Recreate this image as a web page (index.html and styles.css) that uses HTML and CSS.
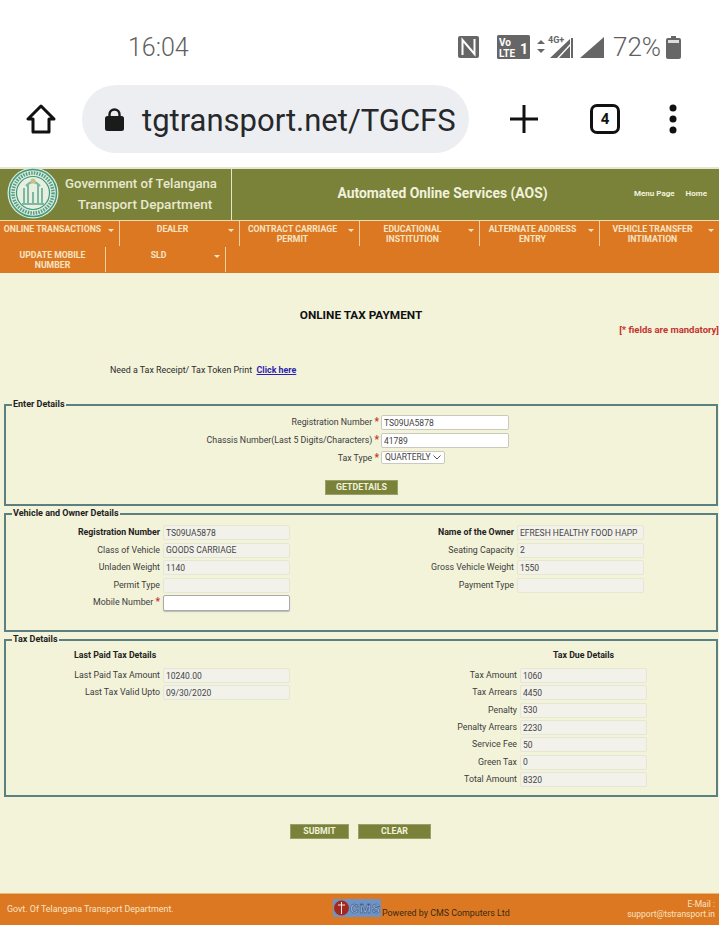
FILE: index.html
```html
<!DOCTYPE html>
<html lang="en">
<head>
<meta charset="utf-8">
<title>Online Tax Payment</title>
<link rel="stylesheet" href="styles.css">
</head>
<body>
<div class="status">
  <span class="time">16:04</span>
  <svg class="ic-nfc" width="21" height="22" viewBox="0 0 21 22"><rect width="21" height="22" rx="2" fill="#666"/><path d="M4.500 19V4l12 14V3" fill="none" stroke="#fff" stroke-width="2"/></svg>
  <svg class="ic-volte" width="33" height="24" viewBox="0 0 33 24"><rect width="33" height="24" rx="1.5" fill="#666"/><text x="2" y="11" class="v-txt">Vo</text><text x="2" y="22" class="v-txt">LTE</text><text x="23" y="19" class="v-one">1</text></svg>
  <svg class="ic-net" width="67" height="24" viewBox="0 0 67 24"><path d="M0 9l4-4 4 4zM0 14h8l-4 4z" fill="#666"/><text x="11" y="8" class="g-txt">4G+</text><path d="M13 23L33 4v5L20 23z" fill="#666"/><path d="M22 23L33 11v12z" fill="#666"/><path d="M34 3h2v20h-2z" fill="#666"/><path d="M43 23L67 2v21z" fill="#666"/></svg>
  <span class="batt-txt">72%</span>
  <svg class="ic-batt" width="15" height="23" viewBox="0 0 15 23"><path d="M5 0h5v2h3a2 2 0 0 1 2 2v17a2 2 0 0 1-2 2H2a2 2 0 0 1-2-2V4a2 2 0 0 1 2-2h3z" fill="#666"/><rect x="2" y="4" width="11" height="3" fill="#ddd"/></svg>
</div>
<div class="toolbar">
  <svg class="ic-home" width="30" height="30" viewBox="0 0 30 30"><path d="M15 2L2 15h5v13h16V15h5z" fill="none" stroke="#111" stroke-width="3" stroke-linejoin="round"/></svg>
  <div class="pill">
    <svg width="19" height="23" viewBox="0 0 19 23"><path d="M4.500 9V6.500a5 5 0 0 1 10 0V9" fill="none" stroke="#1b1b1b" stroke-width="2.400"/><rect y="8" width="19" height="15" rx="2.500" fill="#1b1b1b"/></svg>
    <span class="url">tgtransport.net/TGCFS</span>
  </div>
  <svg class="ic-plus" width="28" height="28" viewBox="0 0 28 28"><path d="M14 0v28M0 14h28" stroke="#111" stroke-width="3"/></svg>
  <div class="tabs">4</div>
  <svg class="ic-dots" width="16" height="30" viewBox="0 0 16 30"><circle cx="8" cy="4" r="3.500" fill="#111"/><circle cx="8" cy="15" r="3.500" fill="#111"/><circle cx="8" cy="26" r="3.500" fill="#111"/></svg>
</div>

<header class="site-head">
  <div class="brand">
    <svg class="emblem" width="52" height="52" viewBox="0 0 52 52">
      <circle cx="26" cy="26" r="25.500" fill="#dfeadb"/>
      <circle cx="26" cy="26" r="23.500" fill="none" stroke="#3f9a7c" stroke-width="1.500"/>
      <circle cx="26" cy="26" r="20" fill="none" stroke="#4f9f86" stroke-width="3.500" stroke-dasharray="1.500 1.200"/>
      <circle cx="26" cy="26" r="16.500" fill="#e6efe0" stroke="#3f9a7c" stroke-width="1.200"/>
      <path d="M15 37h22M17 37V21M35 37V21M21 37V18M31 37V18M26 37V25" stroke="#7db8a2" stroke-width="2" fill="none"/>
      <path d="M19 19q7-8 14 0" stroke="#7db8a2" stroke-width="2" fill="none"/>
      <circle cx="26" cy="14" r="2.500" fill="#c9c27e"/>
    </svg>
    <div class="brand-name">Government of Telangana<br><span class="dept">Transport Department</span></div>
  </div>
  <div class="head-title">Automated Online Services (AOS)</div>
  <nav class="head-links"><a>Menu Page</a><a>Home</a></nav>
</header>

<nav class="menu">
  <div class="menu-row">
    <div class="mi"><span>ONLINE TRANSACTIONS</span><i></i></div>
    <div class="mi"><span>DEALER</span><i></i></div>
    <div class="mi"><span>CONTRACT CARRIAGE PERMIT</span><i></i></div>
    <div class="mi"><span>EDUCATIONAL INSTITUTION</span><i></i></div>
    <div class="mi"><span>ALTERNATE ADDRESS ENTRY</span><i></i></div>
    <div class="mi"><span>VEHICLE TRANSFER INTIMATION</span><i></i></div>
  </div>
  <div class="menu-row">
    <div class="mi mi-plain"><span>UPDATE MOBILE NUMBER</span></div>
    <div class="mi"><span>SLD</span><i></i></div>
  </div>
</nav>

<main class="main">
  <h1 class="title">ONLINE TAX PAYMENT</h1>
  <p class="mandatory">[* fields are mandatory]</p>
  <p class="receipt">Need a Tax Receipt/ Tax Token Print &nbsp;<a href="#">Click here</a></p>

  <fieldset class="box box-enter">
    <legend>Enter Details</legend>
    <div class="enter-grid">
      <label>Registration Number <b>*</b></label><input value="TS09UA5878">
      <label>Chassis Number(Last 5 Digits/Characters) <b>*</b></label><input value="41789">
      <label>Tax Type <b>*</b></label><div class="sel">QUARTERLY <svg width="8" height="5" viewBox="0 0 8 5"><path d="M.5.500L4 4l3.500-3.500" fill="none" stroke="#555"/></svg></div>
    </div>
    <div class="center"><button class="btn btn-get">GETDETAILS</button></div>
  </fieldset>

  <fieldset class="box box-vehicle">
    <legend>Vehicle and Owner Details</legend>
    <div class="sides">
      <div class="side side-l">
        <label class="strong">Registration Number</label><input class="ro" readonly value="TS09UA5878">
        <label>Class of Vehicle</label><input class="ro" readonly value="GOODS CARRIAGE">
        <label>Unladen Weight</label><input class="ro" readonly value="1140">
        <label>Permit Type</label><input class="ro" readonly>
        <label>Mobile Number <b>*</b></label><input class="mobile">
      </div>
      <div class="side side-r">
        <label class="strong">Name of the Owner</label><input class="ro" readonly value="EFRESH HEALTHY FOOD HAPP">
        <label>Seating Capacity</label><input class="ro" readonly value="2">
        <label>Gross Vehicle Weight</label><input class="ro" readonly value="1550">
        <label>Payment Type</label><input class="ro" readonly>
      </div>
    </div>
  </fieldset>

  <fieldset class="box box-tax">
    <legend>Tax Details</legend>
    <div class="sides sides-tax">
      <div class="side side-l">
        <div class="head-left">Last Paid Tax Details</div>
        <label>Last Paid Tax Amount</label><input class="ro" readonly value="10240.00">
        <label>Last Tax Valid Upto</label><input class="ro" readonly value="09/30/2020">
      </div>
      <div class="side side-r">
        <div class="head-right">Tax Due Details</div>
        <label>Tax Amount</label><input class="ro" readonly value="1060">
        <label>Tax Arrears</label><input class="ro" readonly value="4450">
        <label>Penalty</label><input class="ro" readonly value="530">
        <label>Penalty Arrears</label><input class="ro" readonly value="2230">
        <label>Service Fee</label><input class="ro" readonly value="50">
        <label>Green Tax</label><input class="ro" readonly value="0">
        <label>Total Amount</label><input class="ro" readonly value="8320">
      </div>
    </div>
  </fieldset>

  <div class="actions">
    <button class="btn btn-submit">SUBMIT</button>
    <button class="btn btn-clear">CLEAR</button>
  </div>
</main>

<footer class="foot">
  <div class="foot-l">Govt. Of Telangana Transport Department.</div>
  <div class="foot-c">
    <svg width="48" height="18" viewBox="0 0 48 18"><rect width="48" height="18" fill="#6f93c4"/><circle cx="8.500" cy="9" r="7.500" fill="#a5281f"/><path d="M8.500 3v12M5 6h7" stroke="#eee" stroke-width="1"/><text x="17" y="14" class="cms">CMS</text></svg>
    <span>Powered by CMS Computers Ltd</span>
  </div>
  <div class="foot-r">E-Mail :<br>support@tstransport.in</div>
</footer>
</body>
</html>
```
FILE: styles.css
```css
* { box-sizing: border-box; }
html, body { margin: 0; padding: 0; }
body {
  width: 719px;
  height: 928px;
  overflow: hidden;
  background: #fff;
  font-family: Roboto, "Liberation Sans", sans-serif;
  color: #333;
}

/* phone chrome */
.status {
  height: 85px;
  display: flex;
  align-items: center;
  padding: 9px 0 0 128px;
  color: #666;
}
.time { font-size: 25px; font-weight: 300; width: 330px; color: #5f5f5f; }
.status svg { display: block; flex: none; }
.ic-volte { margin-left: 18px; }
.ic-net { margin-left: 7px; }
.batt-txt { font-size: 26px; font-weight: 300; margin-left: 9px; width: 53px; color: #5f5f5f; }
.v-txt { font: 700 10px Roboto, sans-serif; fill: #fff; }
.v-one { font: 700 14px Roboto, sans-serif; fill: #fff; }
.g-txt { font: 700 9px Roboto, sans-serif; fill: #666; }

.toolbar {
  height: 82px;
  display: flex;
  align-items: flex-start;
  padding-left: 26px;
}
.toolbar svg { display: block; flex: none; }
.ic-home { margin-top: 19px; }
.pill {
  width: 387px;
  height: 68px;
  margin-left: 26px;
  background: #eceef1;
  border-radius: 34px;
  display: flex;
  align-items: center;
  padding-left: 23px;
}
.url { margin-left: 18px; padding-top: 2px; font-size: 31px; color: #26282b; white-space: nowrap; }
.ic-plus { margin: 20px 0 0 41px; }
.tabs {
  margin: 19px 0 0 52px;
  width: 30px;
  height: 30px;
  border: 3px solid #111;
  border-radius: 7px;
  font: 700 15px/24px Roboto, sans-serif;
  color: #111;
  text-align: center;
}
.ic-dots { margin: 19px 0 0 45px; }

/* site header */
.site-head {
  height: 53px;
  background: #7a8139;
  border-top: 2px solid #e6e6d2;
  display: flex;
  align-items: center;
  color: #f1f1dc;
}
.brand {
  flex: none;
  width: 232px;
  height: 100%;
  border-right: 1px solid #e6e6c8;
  display: flex;
  align-items: center;
  padding-left: 8px;
}
.emblem { display: block; flex: none; margin: -3px 0 0 -1px; }
.brand-name {
  flex: 1;
  text-align: center;
  font-size: 13.200px;
  font-weight: 500;
  line-height: 20px;
  margin: 0 8px 0 0;
  color: #e8e8d0;
  white-space: nowrap;
}
.dept { font-size: 13.600px; padding-left: 8px; }
.head-title {
  flex: none;
  width: 402px;
  padding-left: 19px;
  margin-top: -3px;
  text-align: center;
  font-size: 13.900px;
  font-weight: 700;
  white-space: nowrap;
}
.head-links { flex: none; display: flex; gap: 11px; margin-top: -3px; font-size: 8px; font-weight: 700; white-space: nowrap; }

.menu { height: 53px; background: #dd7822; border-top: 1px solid #f0d9b0; color: #f5e4c4; }
.menu-row { display: flex; height: 26px; }
.mi {
  flex: none;
  width: 120px;
  display: flex;
  align-items: flex-start;
  padding-top: 3px;
  border-right: 1px solid #f2cf9c;
  margin-bottom: 1px;
}
.mi span {
  width: 105px;
  text-align: center;
  font-size: 8.700px;
  line-height: 10px;
  font-weight: 700;
}
.mi i {
  margin: 5px 0 0 3px;
  width: 0;
  height: 0;
  border: 3.500px solid transparent;
  border-top: 3px solid #f5e4c4;
  border-bottom: 0;
}
.mi-plain { width: 106px; justify-content: center; }
.mi-plain span { width: 76px; }

/* content */
.main { height: 620px; background: #f3f3da; padding-top: 35px; overflow: hidden; }
.title { margin: 0; font-size: 11.800px; line-height: 14px; font-weight: 700; color: #111; text-align: center; padding-left: 3px; }
.mandatory { margin: 2px 0 0; font-size: 9.500px; line-height: 11px; font-weight: 700; color: #c4332f; text-align: right; }
.receipt { margin: 30px 0 0 110px; font-size: 8.900px; line-height: 11px; color: #2c2c2c; }
.receipt a { color: #2c1fb0; font-weight: 700; }

.box {
  margin: 23px 1px 0 4px;
  padding: 0;
  min-width: 0;
  border: 2px solid #5c7f7f;
}
.box + .box { margin-top: 2px; }
.box legend {
  margin-left: 6px;
  padding: 0 1px;
  font-size: 9px;
  line-height: 11px;
  font-weight: 700;
  color: #222;
}
input {
  display: block;
  width: 100%;
  height: 15px;
  margin: 0;
  padding: 0 2px;
  font: 400 8.500px Roboto, sans-serif;
  color: #444;
  background: #fff;
  border: 1px solid #c9c9bd;
  border-radius: 2px;
  outline: none;
}
label {
  font-size: 8.800px;
  line-height: 15px;
  height: 15px;
  color: #3c3c3c;
  text-align: right;
  white-space: nowrap;
}
label b { color: #c4332f; font-weight: 700; font-size: 10px; line-height: 0; }
label.strong { font-weight: 700; color: #222; }

.enter-grid {
  display: grid;
  grid-template-columns: 373px 128px;
  column-gap: 2px;
  row-gap: 3px;
  padding-top: 5px;
  align-items: start;
}
.enter-grid label { line-height: 14px; }
.sel {
  width: 64px;
  height: 13px;
  background: #fff;
  border: 1px solid #c9c9bd;
  border-radius: 2px;
  font-size: 8.500px;
  line-height: 11px;
  padding-left: 3px;
  color: #444;
  white-space: nowrap;
}
.center { text-align: center; padding: 14px 0 5px; margin-left: 1px; }
.btn {
  display: inline-block;
  height: 15px;
  padding: 0;
  border: 1px solid #9aa06a;
  background: #7a8139;
  color: #f1f1dc;
  font: 700 8.800px/13px Roboto, sans-serif;
  vertical-align: top;
}
.btn-get { width: 73px; }
.btn-submit { width: 59px; }
.btn-clear { width: 73px; margin-left: 9px; }

.sides { display: flex; padding-top: 6px; height: 111px; }
.side { display: grid; column-gap: 3px; row-gap: 2.500px; align-content: start; }
.side-l { grid-template-columns: 154px 127px; }
.side-r { grid-template-columns: 224px 127px; }
.ro { background: #f2f2ea; border-color: #e6e6d4; }
.mobile { height: 16px; border-color: #aaa; box-shadow: 0 1px 1px #bbb; }

.sides-tax { height: 150px; padding-top: 0; }
.sides-tax .side { row-gap: 2.330px; }
.sides-tax .side-l, .sides-tax .side-r { grid-template-rows: 20.800px; }
.sides-tax .side-r { margin-left: 3px; }
.head-left, .head-right { font-size: 8.800px; font-weight: 700; color: #222; line-height: 20px; }
.head-left { grid-column: 1 / -1; padding-left: 68px; }
.head-right { grid-column: 2; text-align: center; white-space: nowrap; }

.actions { display: flex; padding: 27px 0 0 290px; }

.foot {
  height: 32px;
  background: #dd7822;
  border-top: 1px solid #e9b878;
  display: flex;
  align-items: center;
  font-size: 8.900px;
  color: #f5e4c4;
}
.foot-l { width: 333px; padding-left: 7px; margin-top: -2px; white-space: nowrap; }
.foot-c { width: 250px; margin-top: -4px; display: flex; align-items: flex-end; color: #3a2a12; white-space: nowrap; }
.foot-c svg { display: block; flex: none; margin-right: 1px; }
.foot-c span { line-height: 10px; margin-bottom: -1px; }
.foot-r { flex: 1; text-align: right; padding-right: 4px; margin-top: -2px; font-size: 8.500px; line-height: 10px; white-space: nowrap; }
.cms { font: 700 13px Roboto, sans-serif; fill: #9dbbe0; stroke: #24406e; stroke-width: .5px; letter-spacing: 1px; }
```
